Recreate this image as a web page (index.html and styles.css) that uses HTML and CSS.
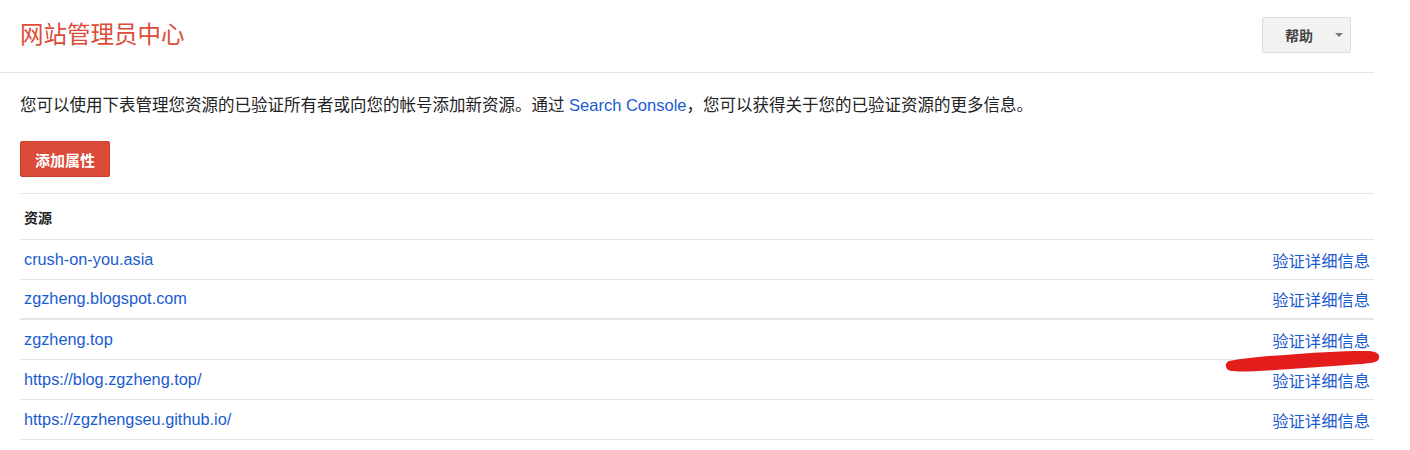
FILE: index.html
```html
<!DOCTYPE html>
<html lang="zh-CN">
<head>
<meta charset="utf-8">
<title>网站管理员中心</title>
<link rel="stylesheet" href="styles.css">
</head>
<body>
<div class="page">
  <header class="topbar">
    <h1 class="title">网站管理员中心</h1>
    <button class="help-btn" type="button"><span>帮助</span><span class="caret"></span></button>
  </header>
  <main class="content">
    <p class="intro">您可以使用下表管理您资源的已验证所有者或向您的帐号添加新资源。通过 <a href="#">Search Console</a>，您可以获得关于您的已验证资源的更多信息。</p>
    <button class="add-btn" type="button">添加属性</button>
    <div class="table">
      <div class="thead">资源</div>
      <div class="row"><a href="#">crush-on-you.asia</a><a href="#">验证详细信息</a></div>
      <div class="row thick"><a href="#">zgzheng.blogspot.com</a><a href="#">验证详细信息</a></div>
      <div class="row"><a href="#">zgzheng.top</a><a href="#">验证详细信息</a></div>
      <div class="row"><a href="#">https://blog.zgzheng.top/</a><a href="#">验证详细信息</a></div>
      <div class="row"><a href="#">https://zgzhengseu.github.io/</a><a href="#">验证详细信息</a></div>
    </div>
  </main>
  <svg class="scribble" width="156" height="24" viewBox="0 0 156 24" aria-hidden="true">
    <path d="M4 11 C20 8 40 6 60 5 C85 3 115 1 140 1 C150 1 155 3 154 8 C153 13 146 13 135 14 C110 16 80 18 50 20 C30 21 15 22 6 21 C0 20 -1 13 4 11 Z" fill="#e31c1c"/>
  </svg>
</div>
</body>
</html>
```

FILE: styles.css
```css
* { box-sizing: border-box; }
body {
  margin: 0;
  background: #fff;
  font-family: "Liberation Sans", Arial, "Noto Sans CJK SC", sans-serif;
  color: #222;
}
.page {
  width: 1374px;
  position: relative;
}
.topbar {
  height: 73px;
  display: flex;
  align-items: flex-start;
  justify-content: space-between;
  padding: 0 23px 0 20px;
  border-bottom: 1px solid #e5e5e5;
}
.title {
  margin: 20px 0 0;
  font-size: 23.5px;
  line-height: 30px;
  font-weight: normal;
  color: #dd4b39;
}
.help-btn {
  margin-top: 17px;
  width: 89px;
  height: 36px;
  display: flex;
  align-items: center;
  padding: 0 0 0 22px;
  background: #f2f2f2;
  border: 1px solid #dcdcdc;
  border-radius: 2px;
  font-family: inherit;
  font-size: 14px;
  font-weight: bold;
  color: #444;
}
.caret {
  margin-left: 22px;
  width: 0;
  height: 0;
  border-left: 4px solid transparent;
  border-right: 4px solid transparent;
  border-top: 4px solid #777;
}
.content {
  padding-left: 20px;
}
.intro {
  margin: 20px 0 0;
  font-size: 16.5px;
  line-height: 24px;
}
a {
  color: #1a5bd0;
  text-decoration: none;
}
.add-btn {
  margin-top: 24px;
  width: 90px;
  height: 36px;
  background: #d94a38;
  border: 1px solid #c83d2c;
  border-radius: 2px;
  color: #fff;
  font-family: inherit;
  font-size: 15px;
  font-weight: bold;
  padding: 0;
}
.table {
  margin-top: 16px;
  border-top: 1px solid #e5e5e5;
}
.thead {
  height: 46px;
  display: flex;
  align-items: center;
  padding: 0 4px;
  font-size: 14px;
  font-weight: bold;
  border-bottom: 1px solid #e5e5e5;
}
.row {
  height: 40px;
  display: flex;
  align-items: center;
  justify-content: space-between;
  padding: 0 4px;
  font-size: 16.3px;
  border-bottom: 1px solid #e5e5e5;
}
.row.thick {
  border-bottom-width: 2px;
  padding-bottom: 1px;
}
.scribble {
  position: absolute;
  left: 1225px;
  top: 350px;
}
```
